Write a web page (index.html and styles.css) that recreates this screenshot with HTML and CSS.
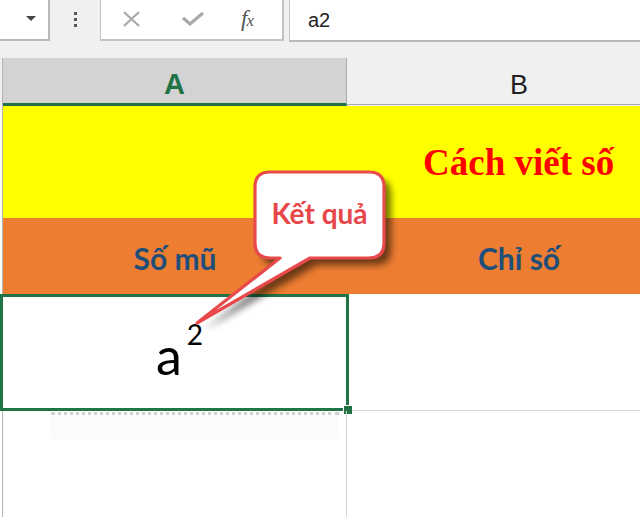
FILE: index.html
```html
<!DOCTYPE html>
<html lang="vi">
<head>
<meta charset="utf-8">
<title>Excel</title>
<link rel="stylesheet" href="styles.css">
</head>
<body>
<div class="app">
  <div class="toolbar">
    <div class="namebox"><span class="caret"></span></div>
    <div class="dots"><i></i><i></i><i></i></div>
    <div class="fxbox">
      <svg class="ico ico-x" width="20" height="18" viewBox="0 0 20 18"><path d="M2 2 L17 16 M17 2 L2 16" stroke="#a8a8a8" stroke-width="2.2" fill="none"/></svg>
      <svg class="ico ico-ok" width="24" height="18" viewBox="0 0 24 18"><path d="M2 8 L9 14 L22 3" stroke="#a8a8a8" stroke-width="3.2" fill="none"/></svg>
      <span class="fx">f<span class="fx-x">x</span></span>
    </div>
    <div class="formula">a2</div>
  </div>
  <div class="sheet">
    <div class="colheads">
      <div class="rh"></div>
      <div class="ch ch-a">A</div>
      <div class="ch ch-b">B</div>
    </div>
    <div class="row r1">
      <div class="rh"></div>
      <div class="merged">Cách viết số</div>
    </div>
    <div class="row r2">
      <div class="rh"></div>
      <div class="cell ca">Số mũ</div>
      <div class="cell cb">Chỉ số</div>
    </div>
    <div class="row r3">
      <div class="rh"></div>
      <div class="cell ca power">a<sup class="exp">2</sup></div>
      <div class="cell cb"></div>
      <div class="selection"><span class="handle"></span></div>
    </div>
    <div class="row r4">
      <div class="rh"></div>
      <div class="cell ca"><div class="ghost"></div></div>
      <div class="cell cb"></div>
    </div>
    <div class="callout">
      <svg class="bubble" width="220" height="185" viewBox="190 160 220 185">
        <defs>
          <filter id="sh" x="-30%" y="-30%" width="160%" height="160%">
            <feGaussianBlur stdDeviation="3.5"/>
          </filter>
        </defs>
        <path d="M270 172 H369 Q384 172 384 187 V243 Q384 258 369 258 H310 L197 323 L280 258 H270 Q255 258 255 243 V187 Q255 172 270 172 Z" transform="translate(7 7)" fill="#000" opacity="0.55" filter="url(#sh)"/>
        <path d="M270 172 H369 Q384 172 384 187 V243 Q384 258 369 258 H310 L197 323 L280 258 H270 Q255 258 255 243 V187 Q255 172 270 172 Z" fill="#fff" stroke="#e84a4c" stroke-width="3.2" stroke-linejoin="round"/>
      </svg>
      <div class="label">Kết quả</div>
    </div>
  </div>
</div>
</body>
</html>
```

FILE: styles.css
```css
* { box-sizing: border-box; }
html, body { margin: 0; padding: 0; }
body {
  width: 640px;
  height: 517px;
  overflow: hidden;
  background: #ffffff;
  font-family: "Liberation Sans", Arial, sans-serif;
}
.app { width: 640px; height: 517px; overflow: hidden; }

/* toolbar */
.toolbar {
  display: flex;
  height: 58px;
  background: #f0f0f0;
  align-items: flex-start;
}
.namebox {
  width: 50px;
  height: 41px;
  background: #fff;
  border-right: 2px solid #b9b9b9;
  border-bottom: 2px solid #b9b9b9;
  display: flex;
  justify-content: flex-end;
  padding: 16px 12px 0 0;
}
.caret {
  width: 0; height: 0;
  border-left: 5px solid transparent;
  border-right: 5px solid transparent;
  border-top: 5px solid #444;
}
.dots {
  width: 50px;
  display: flex;
  flex-direction: column;
  align-items: center;
  gap: 3px;
  padding-top: 12px;
}
.dots i { display: block; width: 3px; height: 3px; background: #555; }
.fxbox {
  width: 184px;
  height: 41px;
  background: #fff;
  border-left: 1px solid #c3c3c3;
  border-right: 2px solid #c3c3c3;
  border-bottom: 2px solid #c3c3c3;
  display: flex;
  align-items: center;
  padding: 0 0 2px 21px;
}
.ico-x { margin-right: 39px; }
.ico-ok { margin-right: 36px; margin-top: 1px; }
.fx {
  font-family: "Liberation Serif", "Times New Roman", serif;
  font-style: italic;
  font-size: 23px;
  color: #555;
  letter-spacing: -1px;
  line-height: 1;
}
.fx-x { font-size: 17px; }
.formula {
  flex: 1;
  height: 42px;
  margin-left: 5px;
  background: #fff;
  border-left: 1px solid #c3c3c3;
  border-bottom: 2px solid #b9b9b9;
  font-size: 20px;
  color: #222;
  padding: 9px 0 0 18px;
}

/* sheet */
.sheet { position: relative; }
.colheads { display: flex; height: 48px; background: #f0f0f0; }
.rh {
  width: 3px;
  flex: none;
  border-right: 1px solid #b4b4b4;
}
.colheads .rh { background: #f0f0f0; }
.ch {
  flex: none;
  display: flex;
  align-items: center;
  justify-content: center;
  font-size: 28px;
  padding-top: 8px;
}
.ch-a {
  width: 344px;
  background: #d3d3d3;
  border-right: 1px solid #ababab;
  border-bottom: 3px solid #217346;
  color: #217346;
  font-weight: bold;
  font-size: 29px;
}
.ch-b {
  width: 344px;
  height: 47px;
  border-bottom: 1px solid #ababab;
  color: #222;
  font-size: 27px;
}

.row { display: flex; position: relative; }
.r1 { height: 112px; background: #ffff00; }
.r2 { height: 76px; background: #ed7d31; }
.r3 { height: 117px; }
.r4 { height: 120px; }
.r1 .rh, .r2 .rh { background: #fff; }

.merged {
  flex: 1;
  display: flex;
  align-items: center;
  padding-left: 420px;
  font-family: "Liberation Serif", "Times New Roman", serif;
  font-weight: bold;
  font-size: 37px;
  color: #ff0000;
  white-space: nowrap;
}

.cell {
  flex: none;
  display: flex;
  align-items: center;
  justify-content: center;
  font-family: Lato, "Liberation Sans", sans-serif;
}
.ca { width: 344px; }
.cb { width: 344px; }
.r2 .cell {
  font-weight: bold;
  font-size: 30px;
  color: #1f4e79;
  padding-top: 3px;
}
.r3 .ca { border-right: 1px solid #d4d4d4; }
.r3 .cb { border-bottom: 1px solid #d4d4d4; }
.r4 .ca { border-right: 1px solid #d4d4d4; align-items: flex-start; justify-content: flex-start; }

.power {
  font-size: 52px;
  color: #000;
  padding: 5px 0 0 10px;
  line-height: 1;
}
.exp {
  font-size: 28px;
  vertical-align: 0;
  position: relative;
  top: -21px;
  margin-left: 5px;
}

.selection {
  position: absolute;
  left: 0;
  top: 0;
  width: 349px;
  height: 117px;
  border: 3px solid #217346;
}
.handle {
  position: absolute;
  right: -6px;
  bottom: -6px;
  width: 9px;
  height: 9px;
  background: #217346;
  border: 1px solid #fff;
  border-right: none;
  border-bottom: none;
}

.ghost {
  margin: 1px 0 0 48px;
  width: 288px;
  height: 27px;
  border-top: 3px dotted #d0d0d0;
  background: #fbfbfb;
}

/* callout */
.callout {
  position: absolute;
  left: 190px;
  top: 102px;
  width: 220px;
  height: 185px;
}
.bubble { position: absolute; left: 0; top: 0; }
.label {
  position: absolute;
  left: 65px;
  top: 12px;
  width: 129px;
  height: 86px;
  display: flex;
  align-items: center;
  justify-content: center;
  font-family: Lato, "Liberation Sans", sans-serif;
  font-weight: bold;
  font-size: 28px;
  color: #e8474a;
  padding-bottom: 4px;
}
```
